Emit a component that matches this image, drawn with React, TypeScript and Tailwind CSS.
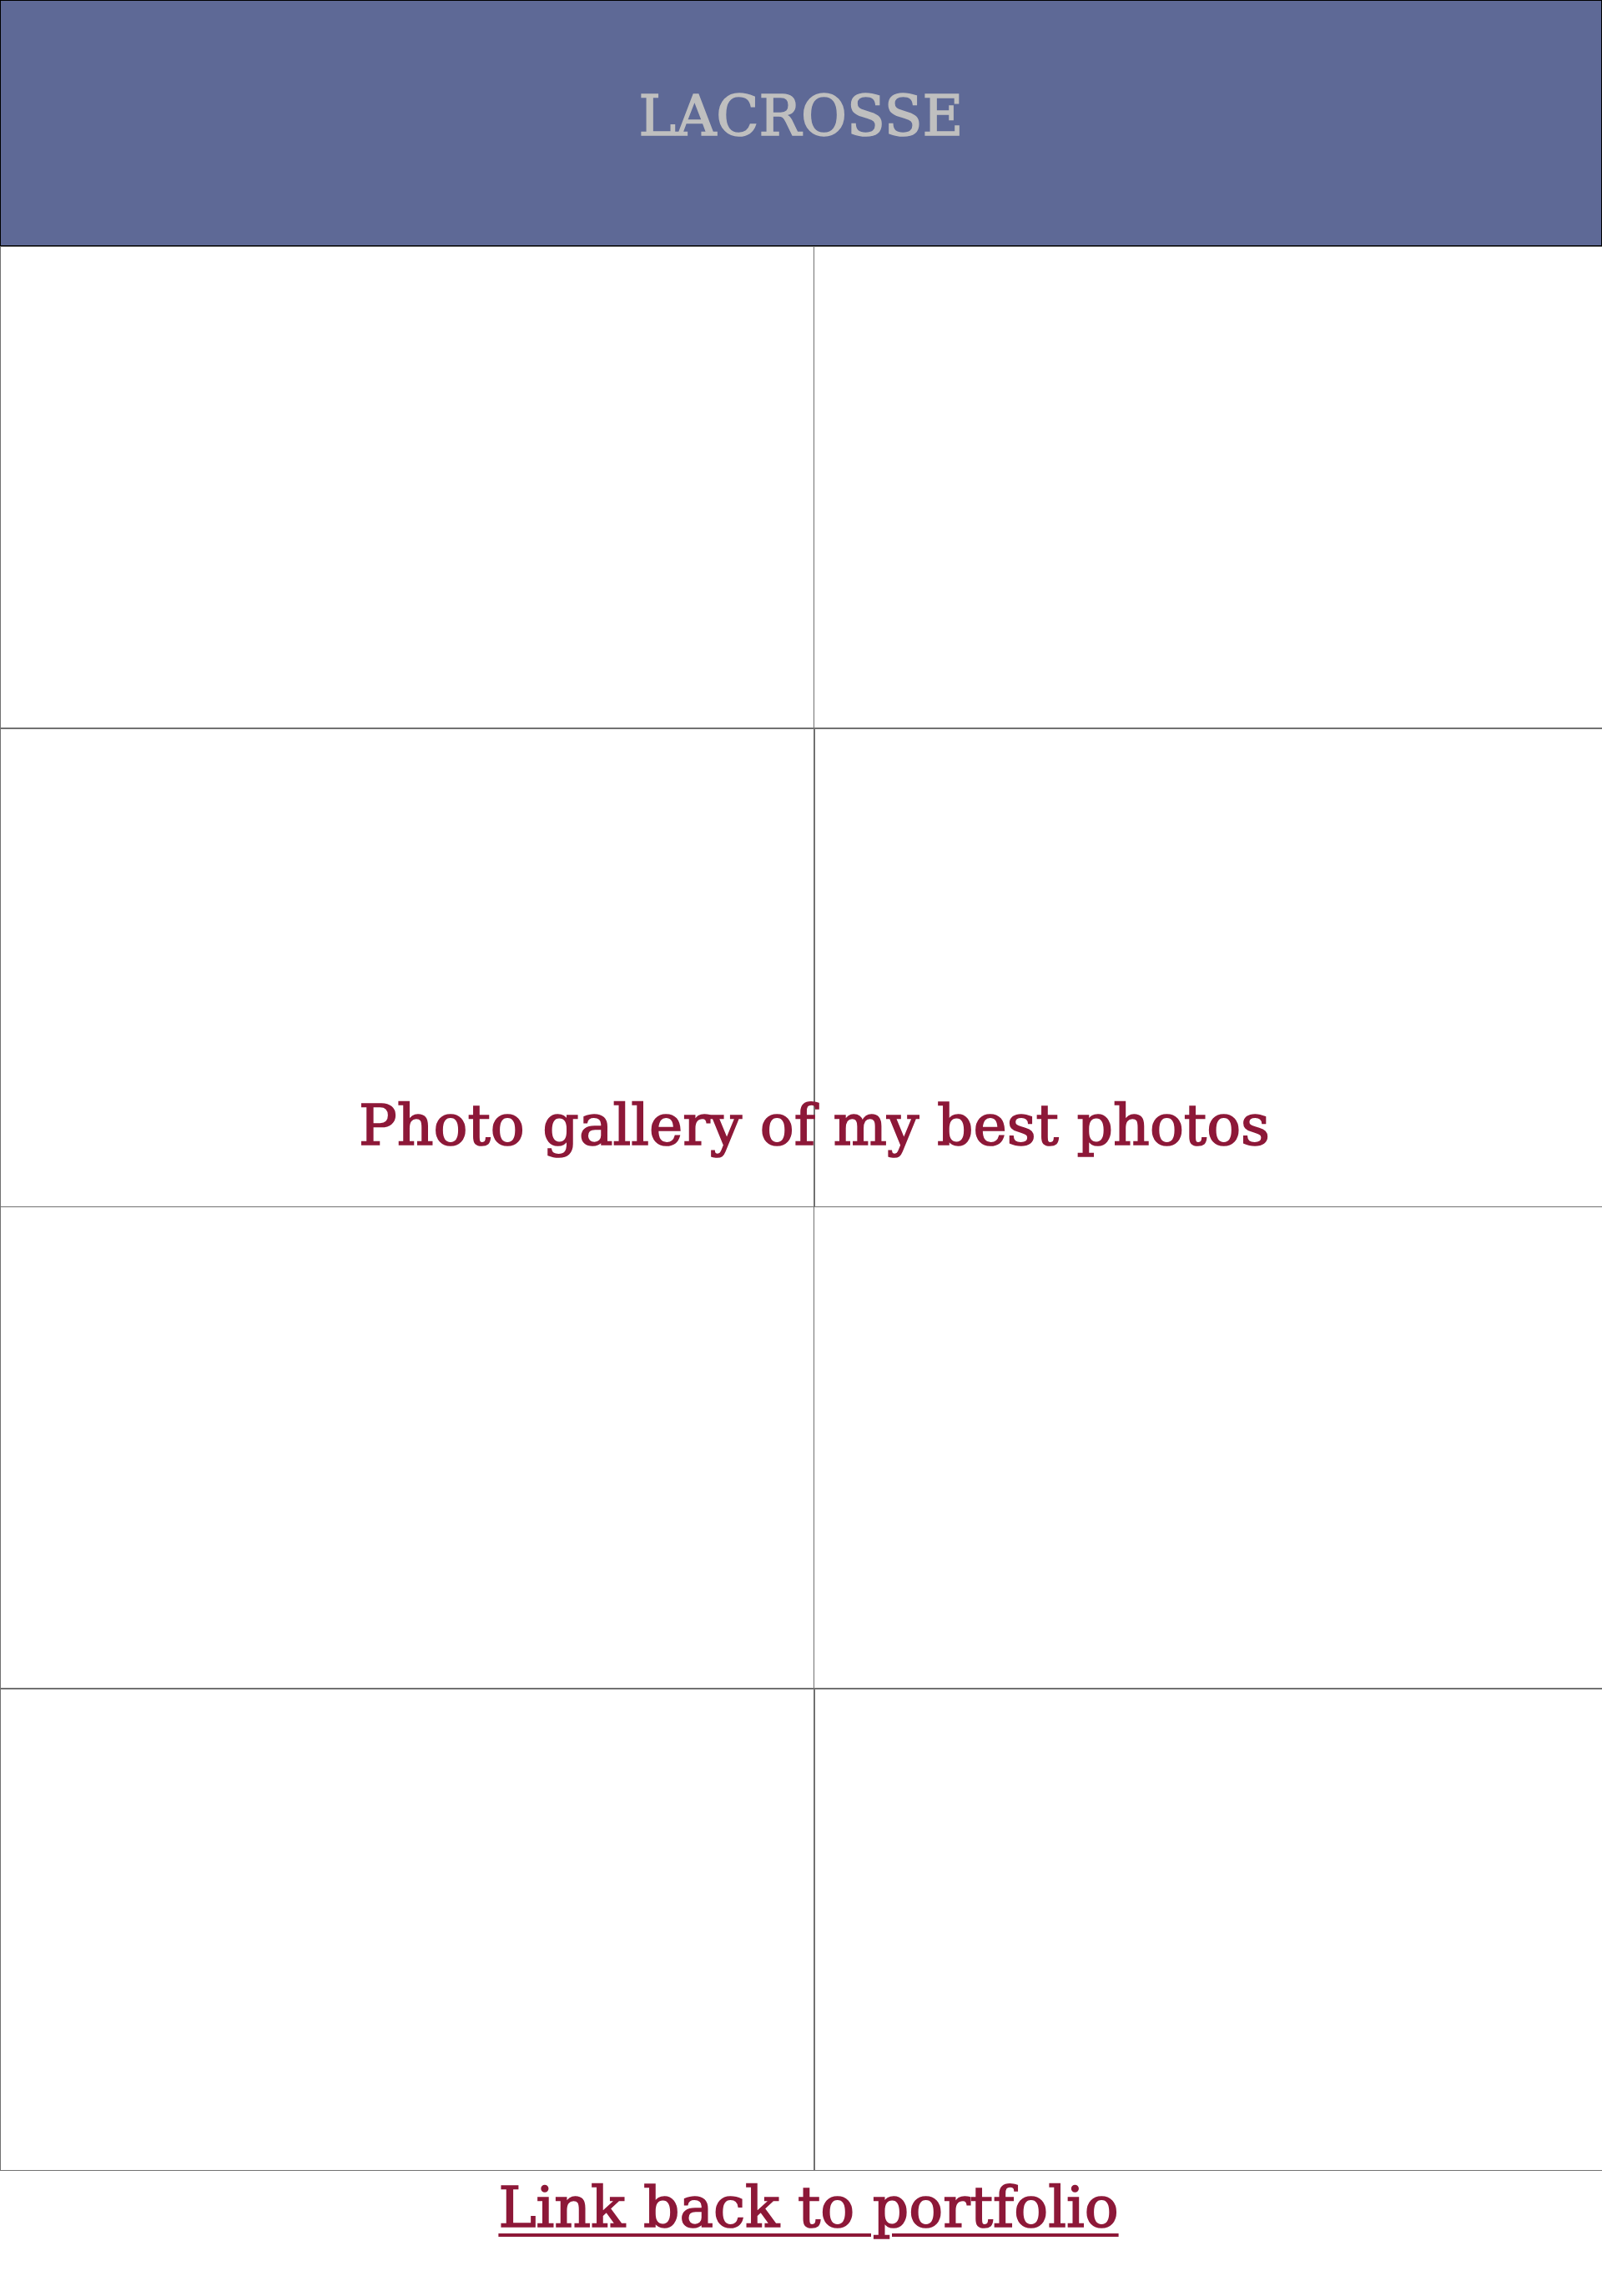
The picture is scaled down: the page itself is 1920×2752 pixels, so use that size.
export default function App() {
  const cellLine = "border-[#717171]";
  return (
    <div className="w-[1920px] h-[2752px] overflow-hidden bg-white font-['Rockwell','DejaVu_Serif',serif]">
      <div className="relative w-[1952px]">
        <header className="w-[1920px] h-[295px] border border-black bg-[#5e6996] pt-[105px] text-center">
          <h1 className="text-[67px] leading-none text-[#bfbfbf] [-webkit-text-stroke-width:1.6px]">LACROSSE</h1>
        </header>

        {/* row 1 */}
        <div className="flex h-[578px]">
          <div className={`w-[976px] border-t border-b border-l border-r ${cellLine}`} />
          <div className={`w-[976px] border-t border-b ${cellLine}`} />
        </div>
        {/* row 2 */}
        <div className="flex h-[574px]">
          <div className={`w-[976px] border-t border-b border-l border-r ${cellLine}`} />
          <div className={`w-[976px] border-t border-b border-l ${cellLine}`} />
        </div>
        {/* row 3 */}
        <div className="flex h-[577px]">
          <div className={`w-[976px] border-b border-l border-r ${cellLine}`} />
          <div className={`w-[976px] border-b ${cellLine}`} />
        </div>
        {/* row 4 */}
        <div className="flex h-[578px]">
          <div className={`w-[976px] border-t border-b border-l border-r ${cellLine}`} />
          <div className={`w-[976px] border-t border-b border-l ${cellLine}`} />
        </div>

        <p className="absolute left-0 right-0 top-[1315px] text-center text-[68px] leading-none text-[#8d1838] [-webkit-text-stroke-width:1.6px]">
          Photo gallery of my best photos
        </p>

        <div className="mt-[10px] pr-[14px] text-center">
          <a href="#" className="text-[68px] leading-none text-[#8d1838] [-webkit-text-stroke-width:1.6px] underline decoration-[4px] underline-offset-[8px]">
            Link back to portfolio
          </a>
        </div>
      </div>
    </div>
  );
}
